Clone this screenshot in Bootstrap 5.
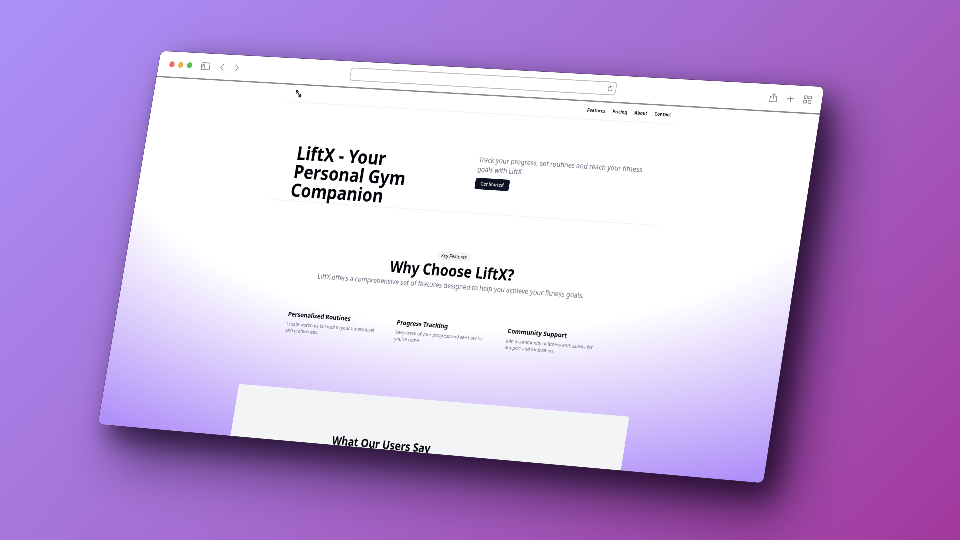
<!DOCTYPE html>
<html lang="en">
<head>
<meta charset="utf-8">
<meta name="viewport" content="width=device-width, initial-scale=1">
<title>LiftX - Your Personal Gym Companion</title>
<link href="https://cdn.jsdelivr.net/npm/bootstrap@5.3.0/dist/css/bootstrap.min.css" rel="stylesheet">
<style>
  body { font-family: "Noto Sans", sans-serif; color: #020308; }
  .stage { background: linear-gradient(135deg, #ab91f9 0%, #a56bd0 50%, #a2389c 100%); }
  /* The browser window is a flat page seen in perspective. */
  .browser {
    left: 0; top: 0; width: 1720px; height: 880px;
    transform-origin: 0 0;
    transform: matrix3d(.35823, .018052, 0, -.00003306, -.07251, .4199, 0, -.00000934, 0, 0, 1, 0, 161, 51, 0, 1);
    border-radius: 14px;
    box-shadow: 0 0 0 1px rgba(60, 50, 70, .6), 60px 64px 130px rgba(15, 0, 25, .62), 30px 28px 60px rgba(15, 0, 25, .58);
  }
  .screen { border-radius: 14px; }
  .toolbar { height: 62px; padding: 0 24px 0 29px; border-bottom: 3px solid #88888c; }
  .side { flex: 1 1 0; }
  .dot { width: 14px; height: 14px; }
  .dots { gap: 10px; }
  .tool { color: #77777c; line-height: 0; }
  .tool svg, .reload svg { fill: none; stroke: currentColor; stroke-width: 1.7; }
  .address { width: 41.5%; }
  .address input { height: 31px; border: 2px solid #bcbcc0; border-radius: 8px; font-size: 14px; box-shadow: none; }
  .reload { right: 8px; top: 8px; color: #77777c; line-height: 0; }
  .page { padding-left: 8px; background: radial-gradient(125% 125% at 50% 10%, #fff 44%, #8b5cf6 98%); }
  .wrap { width: 59%; }
  .site-head { height: 41px; padding: 0 14px 0 20px; }
  .rule { border-bottom: 2px solid #f3f4f6; }
  .site-head a { color: #020308; font-size: 11px; font-weight: 600; text-decoration: none; }
  .site-nav { gap: 18px; }
  .hero { padding: 94px 36px 4px 52px; }
  .hero-side { width: 50%; }
  .hero h1 { font-size: 43px; line-height: 43px; font-weight: 700; max-width: 340px; }
  .muted { color: #6b7280; }
  .intro { font-size: 16px; line-height: 22px; }
  .btn-start { background: #0f1224; color: #fff; font-size: 11px; line-height: 16px; padding: 5px 14px; border-radius: 5px; font-weight: 500; }
  .btn-start:hover { background: #23263c; color: #fff; }
  .features { padding-top: 90px; height: 428px; }
  .tag { background: #f3f4f6; font-size: 11px; line-height: 16px; padding: 2px 10px; border-radius: 6px; }
  .features h2 { font-size: 35px; line-height: 46px; font-weight: 700; }
  .feature-list { width: 812px; gap: 48px; margin-top: 70px; }
  .feature-list h3 { font-size: 15px; line-height: 21px; font-weight: 700; }
  .feature-list p { font-size: 11px; line-height: 15px; }
  .users { background: #f3f4f6; padding: 92px 0 0 268px; }
  .users h2 { font-size: 26px; line-height: 34px; font-weight: 700; }
</style>
<script src="https://cdn.jsdelivr.net/npm/bootstrap@5.3.0/dist/js/bootstrap.bundle.min.js"></script>
</head>
<body>
<div class="stage position-relative vh-100 overflow-hidden">
  <div class="browser position-absolute">
    <div class="screen h-100 overflow-hidden bg-white d-flex flex-column">
      <div class="toolbar d-flex align-items-center bg-white flex-shrink-0">
        <div class="side d-flex align-items-center">
          <div class="dots d-flex">
            <span class="dot rounded-circle" style="background:#ec6a62"></span>
            <span class="dot rounded-circle" style="background:#f4b04c"></span>
            <span class="dot rounded-circle" style="background:#56bd57"></span>
          </div>
          <button class="tool btn p-0 border-0 ms-4" aria-label="Sidebar"><svg width="26" height="20" viewBox="0 0 26 20"><rect x="2" y="2" width="22" height="16" rx="2"/><path d="M10 2v16M4 6h3M4 9h3M4 12h3"/></svg></button>
          <button class="tool btn p-0 border-0 ms-4" aria-label="Back"><svg width="16" height="20" viewBox="0 0 16 20"><path d="M12 2 4 10l8 8"/></svg></button>
          <button class="tool btn p-0 border-0 ms-4" aria-label="Forward"><svg width="16" height="20" viewBox="0 0 16 20"><path d="m4 2 8 8-8 8"/></svg></button>
        </div>
        <div class="address position-relative">
          <input class="form-control bg-white py-0" type="text" aria-label="Address">
          <button class="reload btn p-0 border-0 position-absolute" aria-label="Reload"><svg width="16" height="16" viewBox="0 0 16 16"><path d="M13 8.500a5 5 0 1 1-5-5h2M8 1l2.500 2.500L8 6"/></svg></button>
        </div>
        <div class="side d-flex align-items-center justify-content-end gap-3">
          <button class="tool btn p-0 border-0 me-1" aria-label="Share"><svg width="22" height="24" viewBox="0 0 22 24"><path d="M7 9H3v12h16V9h-4M11 15V3M7 7l4-4 4 4"/></svg></button>
          <button class="tool btn p-0 border-0 me-1" aria-label="New tab"><svg width="22" height="22" viewBox="0 0 22 22"><path d="M11 3v16M3 11h16"/></svg></button>
          <button class="tool btn p-0 border-0" aria-label="Tabs"><svg width="22" height="22" viewBox="0 0 22 22"><rect x="2" y="3" width="7" height="6" rx="1"/><rect x="13" y="3" width="7" height="6" rx="1"/><rect x="2" y="13" width="7" height="6" rx="1"/><rect x="13" y="13" width="7" height="6" rx="1"/></svg></button>
        </div>
      </div>
      <main class="page flex-grow-1 overflow-hidden">
        <div class="wrap mx-auto">
          <header class="site-head rule d-flex align-items-center justify-content-between">
            <a href="#" aria-label="LiftX home"><svg width="20" height="20" viewBox="0 0 20 20" fill="none" stroke="#020308" stroke-width="1.8"><path d="M6 6l8 8M2 7l5-5M4 9l5-5M2 2l2 2M11 16l5-5M13 18l5-5M16 16l2 2"/></svg></a>
            <nav class="site-nav d-flex">
              <a href="#features">Features</a><a href="#pricing">Pricing</a><a href="#about">About</a><a href="#contact">Contact</a>
            </nav>
          </header>
          <section class="hero rule d-flex">
            <div class="hero-side"><h1 class="mb-0">LiftX - Your Personal Gym Companion</h1></div>
            <div class="hero-side ps-3">
              <p class="intro muted mb-2">Track your progress, set routines and reach your fitness goals with LiftX.</p>
              <button class="btn btn-start border-0">Get Started</button>
            </div>
          </section>
          <section id="features" class="features d-flex flex-column align-items-center">
            <span class="tag">Key Features</span>
            <h2 class="mb-0">Why Choose LiftX?</h2>
            <p class="intro muted mb-0">LiftX offers a comprehensive set of features designed to help you achieve your fitness goals.</p>
            <div class="feature-list d-flex">
              <div class="side"><h3 class="mb-1">Personalized Routines</h3><p class="muted mb-0">Create workouts tailored to your fitness level and preferences.</p></div>
              <div class="side"><h3 class="mb-1">Progress Tracking</h3><p class="muted mb-0">Keep track of your progress and see how far you've come.</p></div>
              <div class="side"><h3 class="mb-1">Community Support</h3><p class="muted mb-0">Join a community of fitness enthusiasts for support and motivation.</p></div>
            </div>
          </section>
          <section class="users"><h2>What Our Users Say</h2></section>
        </div>
      </main>
    </div>
  </div>
</div>
</body>
</html>
